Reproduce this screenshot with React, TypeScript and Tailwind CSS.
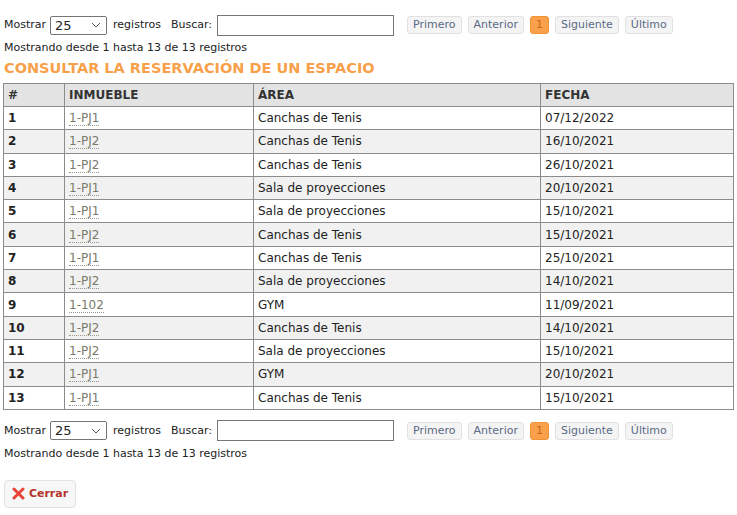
import React from "react";

const rows = [
  ["1", "1-PJ1", "Canchas de Tenis", "07/12/2022"],
  ["2", "1-PJ2", "Canchas de Tenis", "16/10/2021"],
  ["3", "1-PJ2", "Canchas de Tenis", "26/10/2021"],
  ["4", "1-PJ1", "Sala de proyecciones", "20/10/2021"],
  ["5", "1-PJ1", "Sala de proyecciones", "15/10/2021"],
  ["6", "1-PJ2", "Canchas de Tenis", "15/10/2021"],
  ["7", "1-PJ1", "Canchas de Tenis", "25/10/2021"],
  ["8", "1-PJ2", "Sala de proyecciones", "14/10/2021"],
  ["9", "1-102", "GYM", "11/09/2021"],
  ["10", "1-PJ2", "Canchas de Tenis", "14/10/2021"],
  ["11", "1-PJ2", "Sala de proyecciones", "15/10/2021"],
  ["12", "1-PJ1", "GYM", "20/10/2021"],
  ["13", "1-PJ1", "Canchas de Tenis", "15/10/2021"],
];

const PageButton = ({ label, active }: { label: string; active?: boolean }) => (
  <span
    className={
      active
        ? "px-[5px] h-[18px] leading-[16px] rounded-[3px] bg-[#f8a04a] text-[#c9661a] border border-[#f19233]"
        : "px-[5px] h-[18px] leading-[16px] rounded-[3px] bg-[#f4f4f4] text-[#5a6a85] border border-[#e1e1e1]"
    }
  >
    {label}
  </span>
);

const Controls = () => (
  <div className="flex items-center h-[22px] text-[11px] text-[#222]">
    <span>Mostrar</span>
    <div className="ml-[4px] w-[57px] h-[19px] border border-[#767676] rounded-[2px] bg-white flex items-center justify-between px-[4px] text-[13px]">
      <span className="leading-none">25</span>
      <svg width="10" height="6" viewBox="0 0 10 6" className="mr-[1px]">
        <path d="M1 1l4 4 4-4" fill="none" stroke="#555" strokeWidth="1" />
      </svg>
    </div>
    <span className="ml-[6px]">registros</span>
    <span className="ml-[10px]">Buscar:</span>
    <div className="ml-[5px] w-[177px] h-[21px] border border-[#767676] bg-white" />
    <div className="ml-[13px] flex items-center gap-[6px] text-[11px]">
      <PageButton label="Primero" />
      <PageButton label="Anterior" />
      <PageButton label="1" active />
      <PageButton label="Siguiente" />
      <PageButton label="Último" />
    </div>
  </div>
);

export default function App() {
  return (
    <div
      className="w-[737px] h-[515px] bg-white px-[4px] pt-[14px] text-[#222]"
      style={{ fontFamily: '"DejaVu Sans", Verdana, sans-serif' }}
    >
      <Controls />
      <div className="text-[11px] mt-[3px] h-[18px] leading-[18px]">Mostrando desde 1 hasta 13 de 13 registros</div>
      <h1 className="text-[14.5px] font-bold text-[#f8a04a] leading-[20px] mt-[1px]">
        CONSULTAR LA RESERVACIÓN DE UN ESPACIO
      </h1>
      <table className="-ml-[1px] mt-[5px] w-[731px] border-collapse border border-[#8c8c8c] text-[12px]">
        <thead>
          <tr className="bg-[#e3e3e3] h-[23px] text-left text-[#333]">
            <th className="w-[61px] border border-[#8c8c8c] px-[4px] font-bold">#</th>
            <th className="w-[189px] border border-[#8c8c8c] px-[4px] font-bold">INMUEBLE</th>
            <th className="w-[287px] border border-[#8c8c8c] px-[4px] font-bold">ÁREA</th>
            <th className="border border-[#8c8c8c] px-[4px] font-bold">FECHA</th>
          </tr>
        </thead>
        <tbody>
          {rows.map((r, i) => (
            <tr key={r[0]} className={i % 2 === 1 ? "bg-[#f1f1f1] h-[23.3px]" : "bg-white h-[23.3px]"}>
              <td className="border border-[#8c8c8c] px-[4px] font-bold">{r[0]}</td>
              <td className="border border-[#8c8c8c] px-[4px]">
                <span className="text-[#7a7a6a] border-b border-dotted border-[#9a9a8a]">{r[1]}</span>
              </td>
              <td className="border border-[#8c8c8c] px-[4px]">{r[2]}</td>
              <td className="border border-[#8c8c8c] px-[4px]">{r[3]}</td>
            </tr>
          ))}
        </tbody>
      </table>
      <div className="mt-[10px]">
        <Controls />
      </div>
      <div className="text-[11px] mt-[3px] h-[18px] leading-[18px]">Mostrando desde 1 hasta 13 de 13 registros</div>
      <button className="mt-[17px] w-[72px] h-[28px] rounded-[4px] border border-[#e3e3e3] bg-[#f7f7f7] flex items-center justify-center gap-[4px] text-[11px] font-bold text-[#b5332a]">
        <svg width="13" height="13" viewBox="0 0 13 13">
          <path d="M2 2l9 9M11 2l-9 9" stroke="#e8443a" strokeWidth="3" strokeLinecap="round" />
        </svg>
        Cerrar
      </button>
    </div>
  );
}
